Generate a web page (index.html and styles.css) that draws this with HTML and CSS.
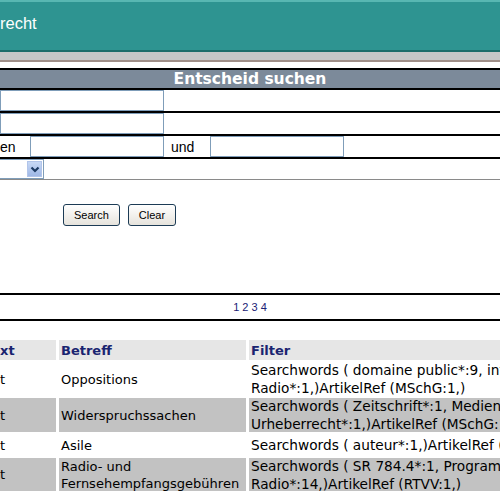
FILE: index.html
```html
<!DOCTYPE html>
<html>
<head>
<meta charset="utf-8">
<link rel="stylesheet" href="styles.css">
</head>
<body>
<div class="page">
  <div class="top"><span class="top-title">recht</span></div>
  <div class="band"></div>
  <div class="gap"></div>
  <div class="search">
    <div class="title">Entscheid suchen</div>
    <div class="frow"><input class="inp inp-wide" type="text"></div>
    <div class="frow"><input class="inp inp-wide" type="text"></div>
    <div class="frow">
      <span class="lbl lbl-en">en</span>
      <input class="inp inp-mid" type="text">
      <span class="lbl lbl-und">und</span>
      <input class="inp inp-mid" type="text">
    </div>
    <div class="frow frow-last">
      <div class="sel"><span class="sel-btn"><svg width="10" height="7" viewBox="0 0 10 7"><path d="M1.5 1.5 L5 5 L8.5 1.5" fill="none" stroke="#1c3a63" stroke-width="2.2"/></svg></span></div>
    </div>
    <div class="buttons">
      <button class="btn">Search</button>
      <button class="btn">Clear</button>
    </div>
  </div>
  <div class="pager">1 2 3 4</div>
  <div class="results">
    <div class="cell head c1">xt</div>
    <div class="cell head">Betreff</div>
    <div class="cell head">Filter</div>

    <div class="cell c1 r1">t</div>
    <div class="cell r1">Oppositions</div>
    <div class="cell r1 filter">Searchwords ( domaine public*:9, internet*:2,<br>Radio*:1,)ArtikelRef (MSchG:1,)</div>

    <div class="cell c1 r2 grey">t</div>
    <div class="cell r2 grey">Widerspruchssachen</div>
    <div class="cell r2 grey filter">Searchwords ( Zeitschrift*:1, Medien*:1,<br>Urheberrecht*:1,)ArtikelRef (MSchG:1,)</div>

    <div class="cell c1 r3">t</div>
    <div class="cell r3">Asile</div>
    <div class="cell r3 filter">Searchwords ( auteur*:1,)ArtikelRef (URG:1,)</div>

    <div class="cell c1 r4 grey">t</div>
    <div class="cell r4 grey">Radio- und<br>Fernsehempfangsgebühren</div>
    <div class="cell r4 grey filter">Searchwords ( SR 784.4*:1, Programm*:2,<br>Radio*:14,)ArtikelRef (RTVV:1,)</div>
  </div>
</div>
</body>
</html>
```
FILE: styles.css
```css
html, body {
  margin: 0;
  padding: 0;
  background: #ffffff;
}
.page {
  width: 500px;
  height: 500px;
  overflow: hidden;
  font-family: "Liberation Sans", Arial, sans-serif;
}
.top {
  height: 48px;
  background: #2e9491;
  border-top: 2px solid #58b7b2;
  border-bottom: 2px solid #1d6d6a;
}
.top-title {
  display: block;
  padding-top: 11px;
  color: #ffffff;
  font-size: 16.5px;
  line-height: 20px;
}
.band {
  height: 8px;
  background: #c7c7c7;
  border-bottom: 2px solid #a08f89;
}
.gap {
  height: 6px;
}
.search {
  border-top: 2px solid #000000;
}
.title {
  height: 18px;
  background: #7c8a9a;
  border-bottom: 2px solid #000000;
  color: #ffffff;
  font-family: "DejaVu Sans", Verdana, sans-serif;
  font-weight: bold;
  font-size: 15.5px;
  line-height: 18px;
  text-align: center;
}
.frow {
  display: flex;
  align-items: center;
  height: 21px;
  border-bottom: 2px solid #000000;
}
.frow-last {
  height: 20px;
  border-bottom: 1px solid #8a8a8a;
}
.inp {
  box-sizing: border-box;
  height: 21px;
  margin: 0;
  padding: 0;
  border: 1px solid #7f9db9;
  background: #ffffff;
}
.inp-wide {
  width: 164px;
}
.inp-mid {
  width: 134px;
}
.lbl {
  font-size: 14px;
  color: #000000;
}
.lbl-en {
  width: 30px;
}
.lbl-und {
  width: 39px;
  padding-left: 7px;
}
.sel {
  display: flex;
  justify-content: flex-end;
  box-sizing: border-box;
  width: 44px;
  height: 20px;
  border: 1px solid #7f9db9;
  border-left: none;
  padding: 1px;
}
.sel-btn {
  display: flex;
  align-items: center;
  justify-content: center;
  width: 15px;
  height: 16px;
  background: linear-gradient(#c7d8f5, #9fb8e6);
  border: 1px solid #b2c5ea;
  box-sizing: border-box;
}
.buttons {
  display: flex;
  align-items: flex-start;
  gap: 8px;
  padding: 24px 0 0 63px;
  height: 115px;
  box-sizing: border-box;
  border-bottom: 2px solid #000000;
}
.btn {
  height: 22px;
  padding: 0 10px;
  margin: 0;
  border: 1px solid #1c3b55;
  border-radius: 3px;
  background: linear-gradient(#ffffff, #e6e3dc);
  font-family: "Liberation Sans", Arial, sans-serif;
  font-size: 11px;
  color: #000000;
}
.pager {
  height: 24px;
  line-height: 24px;
  text-align: center;
  font-size: 11px;
  color: #1b2275;
  border-bottom: 2px solid #000000;
}
.results {
  display: grid;
  grid-template-columns: 56px 187px 420px;
  column-gap: 3px;
  margin-top: 19px;
  font-family: "DejaVu Sans", Verdana, sans-serif;
  font-size: 13px;
  line-height: 17px;
  color: #000000;
}
.cell {
  display: flex;
  align-items: center;
  padding-left: 2px;
  white-space: nowrap;
}
.c1 {
  padding-left: 0;
}
.head {
  height: 20px;
  background: #e6e6e6;
  color: #1a2470;
  font-weight: bold;
}
.r1 { height: 38px; }
.r2 { height: 34px; }
.r3 { height: 26px; }
.r4 { height: 33px; }
.grey {
  background: #c2c2c2;
}
.filter {
  font-size: 13.7px;
  line-height: 18px;
}
```
